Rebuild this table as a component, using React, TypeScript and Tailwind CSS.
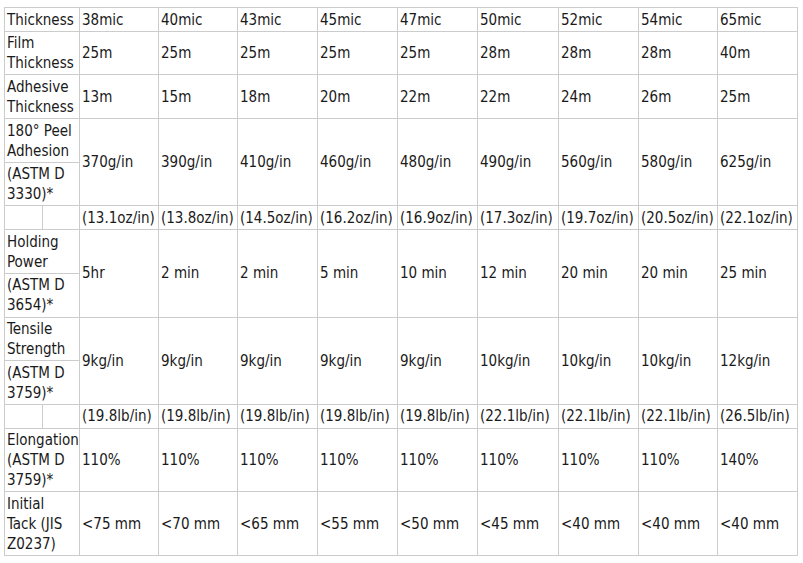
import React from "react";

const td = "border border-[#cccccc] pl-[2px] pr-[1px] pt-[1.5px] pb-[1.2px] align-middle text-left whitespace-nowrap";

type Row = { label: React.ReactNode; sub?: React.ReactNode; values: string[]; empty?: boolean };

const rows: Row[] = [
  { label: "Thickness", values: ["38mic", "40mic", "43mic", "45mic", "47mic", "50mic", "52mic", "54mic", "65mic"] },
  { label: <>Film<br />Thickness</>, values: ["25m", "25m", "25m", "25m", "25m", "28m", "28m", "28m", "40m"] },
  { label: <>Adhesive<br />Thickness</>, values: ["13m", "15m", "18m", "20m", "22m", "22m", "24m", "26m", "25m"] },
  {
    label: <>180° Peel<br />Adhesion</>,
    sub: <>(ASTM D<br />3330)*</>,
    values: ["370g/in", "390g/in", "410g/in", "460g/in", "480g/in", "490g/in", "560g/in", "580g/in", "625g/in"],
  },
  {
    label: "",
    empty: true,
    values: ["(13.1oz/in)", "(13.8oz/in)", "(14.5oz/in)", "(16.2oz/in)", "(16.9oz/in)", "(17.3oz/in)", "(19.7oz/in)", "(20.5oz/in)", "(22.1oz/in)"],
  },
  {
    label: <>Holding<br />Power</>,
    sub: <>(ASTM D<br />3654)*</>,
    values: ["5hr", "2 min", "2 min", "5 min", "10 min", "12 min", "20 min", "20 min", "25 min"],
  },
  {
    label: <>Tensile<br />Strength</>,
    sub: <>(ASTM D<br />3759)*</>,
    values: ["9kg/in", "9kg/in", "9kg/in", "9kg/in", "9kg/in", "10kg/in", "10kg/in", "10kg/in", "12kg/in"],
  },
  {
    label: "",
    empty: true,
    values: ["(19.8lb/in)", "(19.8lb/in)", "(19.8lb/in)", "(19.8lb/in)", "(19.8lb/in)", "(22.1lb/in)", "(22.1lb/in)", "(22.1lb/in)", "(26.5lb/in)"],
  },
  { label: <>Elongation<br />(ASTM D<br />3759)*</>, values: ["110%", "110%", "110%", "110%", "110%", "110%", "110%", "110%", "140%"] },
  { label: <>Initial<br />Tack (JIS<br />Z0237)</>, values: ["<75 mm", "<70 mm", "<65 mm", "<55 mm", "<50 mm", "<45 mm", "<40 mm", "<40 mm", "<40 mm"] },
];

export default function App() {
  return (
    <div className="min-h-[563px] bg-white pl-[4px] pt-[7px] text-[#1a1a1a] text-[15px] leading-[20px] [font-family:'DejaVu_Sans_Condensed','DejaVu_Sans',sans-serif]">
      <table className="table-fixed border-collapse w-[794px]">
        <colgroup>
          <col className="w-[38px]" />
          <col className="w-[37px]" />
          <col className="w-[79px]" />
          <col className="w-[79px]" />
          <col className="w-[80px]" />
          <col className="w-[80px]" />
          <col className="w-[80px]" />
          <col className="w-[81px]" />
          <col className="w-[80px]" />
          <col className="w-[79px]" />
          <col className="w-[80px]" />
        </colgroup>
        <tbody>
          {rows.map((r, i) => {
            if (r.empty) {
              return (
                <tr key={i}>
                  <td className={td}></td>
                  <td className={td}></td>
                  {r.values.map((v, j) => (
                    <td key={j} className={td}>{v}</td>
                  ))}
                </tr>
              );
            }
            if (r.sub) {
              return (
                <React.Fragment key={i}>
                  <tr>
                    <td colSpan={2} className={td + " align-top"}>{r.label}</td>
                    {r.values.map((v, j) => (
                      <td key={j} rowSpan={2} className={td}>{v}</td>
                    ))}
                  </tr>
                  <tr>
                    <td colSpan={2} className={td + " align-top"}>{r.sub}</td>
                  </tr>
                </React.Fragment>
              );
            }
            return (
              <tr key={i}>
                <td colSpan={2} className={td}>{r.label}</td>
                {r.values.map((v, j) => (
                  <td key={j} className={td}>{v}</td>
                ))}
              </tr>
            );
          })}
        </tbody>
      </table>
    </div>
  );
}
